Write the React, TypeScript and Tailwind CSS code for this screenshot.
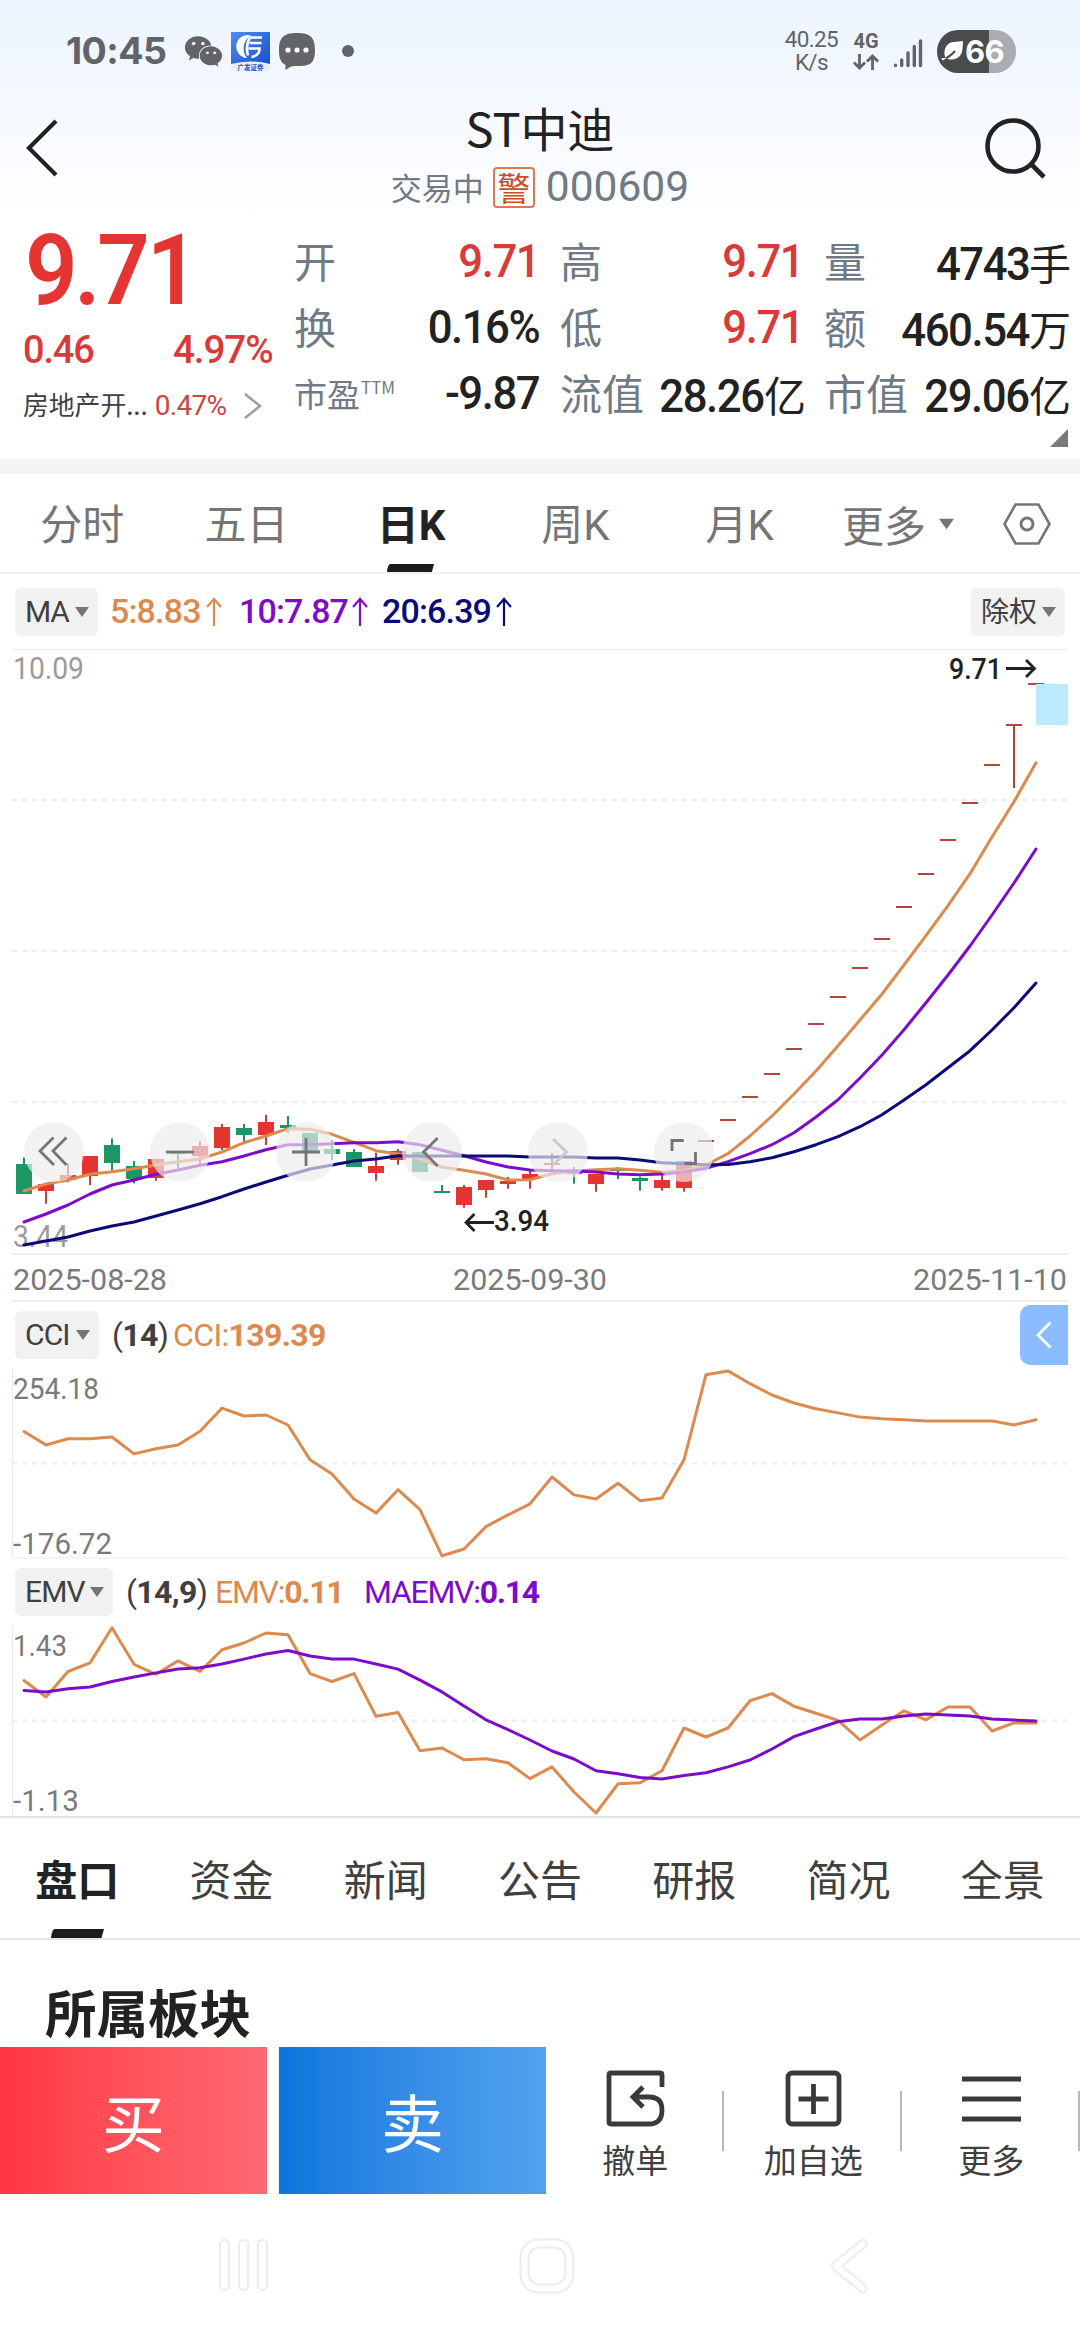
import type { ReactNode } from 'react';
import { FaWeixin } from 'react-icons/fa';
import { clsx } from 'clsx';

const RED = '#e53532';
const GREEN = '#1c9664';
const ORANGE = '#dd8a4e';
const PURPLE = '#7d0cc8';
const NAVY = '#0a0a78';

const STEP = 22;
const FIRST_X = 24;

// [colour, high, body top, body bottom, low]
type Candle = ['r' | 'g', number, number, number, number];

const candles: Candle[] = [
  ['g', 508.3, 515, 545, 545],
  ['r', 535, 535, 542, 554.7],
  ['r', 514.3, 526, 531, 533.3],
  ['r', 507, 507, 527, 536],
  ['g', 489.3, 496, 514, 521],
  ['g', 512, 517, 530, 534.3],
  ['r', 510, 510, 529, 531.7],
  ['g', 503, 503, 505, 519.3],
  ['r', 492, 497, 507, 516],
  ['r', 475, 478, 499, 501],
  ['g', 475, 479, 486, 493],
  ['r', 466, 473, 486, 496],
  ['g', 467, 476, 479, 483.7],
  ['g', 484, 484, 503, 503],
  ['g', 491, 500, 505, 511],
  ['g', 500, 503, 518, 518],
  ['r', 503.7, 517, 524, 531.7],
  ['r', 500, 502, 511, 515.7],
  ['g', 503, 503, 523, 523],
  ['g', 536, 542, 544, 544],
  ['r', 536, 538, 556, 558.7],
  ['r', 531, 531, 541, 548.7],
  ['r', 528, 532, 535, 539.7],
  ['r', 522, 525, 530, 539.7],
  ['r', 504, 514, 516, 522.7],
  ['g', 518, 523, 525, 534.7],
  ['r', 525, 525, 535, 542.7],
  ['g', 518, 520, 522, 530],
  ['g', 527.7, 529, 532, 541.7],
  ['r', 525, 531, 539, 541.7],
  ['r', 512, 512, 539, 542.7],
];

// one-price limit-up days after the last full candle
const limitUps = [492, 471, 448, 425, 400, 375, 348, 319, 290, 258, 225, 191, 154, 116, 76, 35];

const ma5 = [
  542, 535, 531, 525.3, 522.7, 519.7, 516, 512.7, 510, 503, 493.7, 487, 479.7, 480.3, 485.3, 493.3,
  501.7, 505, 510, 518, 521.3, 525, 531, 530.7, 524.7, 522, 520.7, 519.7, 521.3, 523.3, 521.7, 516,
  504.7, 487, 467, 445, 422, 396.7, 371, 345, 316, 286.7, 256.7, 224.7, 188, 152.7, 113.7,
];
const ma10 = [
  573, 565, 556, 545, 536, 531, 525.3, 521, 516.3, 512.7, 507, 500.7, 495.7, 495.7, 494.7, 493.7,
  493.7, 492.7, 495.7, 501.3, 506.7, 513, 518, 521, 521.7, 522, 523, 525, 525.7, 525, 523, 519.3,
  512.7, 504.7, 495.7, 483.7, 468, 450.7, 429, 406, 380.7, 353.7, 326, 297, 266, 234, 200,
];
const ma20 = [
  596, 592, 588, 582, 577, 573, 567, 561, 554.7, 547.7, 540, 533, 526.3, 520, 516, 512, 510, 506.7,
  507, 507, 507, 507, 507, 508, 508, 508, 509, 509, 511, 513.7, 514.7, 515.7, 515.5, 512.7, 508.7,
  502.7, 495.7, 487.7, 477.7, 465.7, 451, 435.7, 418.7, 401.7, 381, 358.7, 334,
];
const cci = [
  63.5, 77, 70.8, 70.8, 69, 85.9, 80.7, 77, 63.2, 40.1, 48, 47, 57, 91.8, 105.9, 131, 145.1, 121.7,
  141.7, 187.8, 181, 158.6, 146.9, 135.8, 109, 126.9, 131, 115.2, 132.7, 130, 91.8, 6.7, 2.9, 15.7,
  27, 35, 40.8, 44.9, 49.1, 50.8, 51.8, 52.9, 52.9, 52.9, 52.9, 57, 51.8,
];
const emv = [
  55.5, 72, 46.5, 37.9, 2.8, 39.3, 49.3, 35.9, 46.5, 24.8, 18, 8, 9.7, 48.6, 56.5, 48.6, 91.3, 87.5,
  125.7, 123, 134.7, 133.7, 137.8, 153.6, 141.9, 167, 188, 158.8, 157.8, 145.7, 103, 112, 103, 75.8,
  68.6, 81.3, 88.2, 95.4, 115, 99.9, 85.8, 94.8, 82, 82, 106, 97.9, 97.9,
];
const maemv = [
  65.5, 66.9, 63.8, 62, 56.5, 52, 47.9, 44.1, 42.8, 39, 34.1, 29, 25.5, 31, 34.1, 34.1, 39, 44.1,
  55.2, 66.9, 81, 94.8, 104.7, 115, 126, 134, 145.7, 148.8, 152.6, 154, 150.5, 147.8, 141.9, 135,
  124, 111.6, 104, 96.8, 94, 94, 91, 88.9, 90, 91, 94, 95.1, 96.1,
];

function Series({ values, color }: { values: number[]; color: string }) {
  const points = values.map((y, i) => `${FIRST_X + i * STEP},${y}`).join(' ');
  return <polyline points={points} fill="none" stroke={color} strokeWidth={3} strokeLinejoin="round" strokeLinecap="round" />;
}

function Dash({ y }: { y: number }) {
  return <line x1={12} x2={1068} y1={y} y2={y} stroke="#ececec" strokeWidth={2} strokeDasharray="5 5" />;
}

type LabelProps = {
  x: number;
  y: number;
  width: number;
  color?: string;
  size?: number;
  weight?: number;
  children: string;
};

function Label({ x, y, width, color = '#7a7a7a', size = 30, weight = 400, children }: LabelProps) {
  return (
    <text x={x} y={y} fill={color} fontSize={size} fontWeight={weight} textLength={width} lengthAdjust="spacingAndGlyphs">
      {children}
    </text>
  );
}

function Caret({ className }: { className?: string }) {
  return (
    <svg viewBox="0 0 14 10" className={clsx('h-[10px] w-[14px] shrink-0', className)} aria-hidden="true">
      <path d="M0 0h14L7 10z" fill="#757575" />
    </svg>
  );
}

function Chip({ children, className }: { children: ReactNode; className: string }) {
  return (
    <button
      type="button"
      className={clsx('flex h-12 shrink-0 items-center justify-between rounded-md bg-[#f1f1f1] pl-[10px] pr-[9px] text-[30px] leading-none text-[#404040]', className)}
    >
      {children}
      <Caret />
    </button>
  );
}

function UpArrow({ className }: { className: string }) {
  return (
    <svg viewBox="0 0 16 30" className={clsx('h-[30px] w-4 shrink-0', className)} fill="none" stroke="currentColor" strokeWidth={2.2}>
      <path d="M8 29V2M1 10l7-8 7 8" />
    </svg>
  );
}

function StatusBar() {
  return (
    <div className="flex h-[102px] items-center pl-[66px] pr-[64px] text-[#636467]">
      <span className="w-[118px] font-['Inter'] text-[37.500px] font-bold leading-none tracking-[-0.015em]">10:45</span>
      <FaWeixin className="size-[39px]" />
      <svg viewBox="0 0 39 39" className="ml-2 size-[39px]">
        <defs>
          <linearGradient id="broker" x1="0" y1="0" x2="1" y2="1">
            <stop offset="0" stopColor="#4f8df0" />
            <stop offset="1" stopColor="#1b4fc8" />
          </linearGradient>
        </defs>
        <rect width="39" height="39" fill="#e9eefa" />
        <path d="M0 0h39v32Q20 27 0 32z" fill="url(#broker)" />
        <path d="M20 3.500A11.500 11.500 0 1 0 16 26C11 21 11 9 20 3.500z" fill="#fff" />
        <path d="M19 5.500h12M18.500 11h12M17.500 16.500h11q0 7-8 8.500M19 5.500q-5 8-2 18" fill="none" stroke="#fff" strokeWidth="2.600" />
        <text x="19.500" y="37.500" textAnchor="middle" fontSize="6.500" fontWeight="700" fill="#2450b8">
          广发证券
        </text>
      </svg>
      <svg viewBox="0 0 36 38" className="ml-[9px] h-[38px] w-9">
        <path d="M18 1C31 1 36 5 36 18S31 34 20 34h-4q-5 0-7 2.500-2 1.500-3 .5 1-2 .5-4C1 30 0 25 0 18 0 5 5 1 18 1z" fill="#636467" />
        <circle cx="9" cy="18" r="2.600" fill="#fff" />
        <circle cx="18" cy="18" r="2.600" fill="#fff" />
        <circle cx="27" cy="18" r="2.600" fill="#fff" />
      </svg>
      <span className="ml-[27px] size-3 rounded-full bg-[#636467]" />

      <div className="ml-auto flex items-center">
        <div className="text-center text-[22.500px] leading-[23px] tracking-[-0.03em]">
          40.25
          <br />
          K/s
        </div>
        <div className="ml-[15px] flex w-[26px] flex-col items-center gap-1">
          <span className="text-[20px] font-bold leading-[18px]">4G</span>
          <svg viewBox="0 0 26 16" className="h-4 w-[26px]" fill="none" stroke="#636467" strokeWidth="2.800">
            <path d="M6.500 0v14M1 8.500l5.500 5.500 5.500-5.500M19.500 16V2M14 7.500L19.500 2 25 7.500" />
          </svg>
        </div>
        <svg viewBox="0 0 30 30" className="ml-[14px] mt-1 h-[30px] w-[30px]" stroke="#636467" strokeWidth="3.400" strokeLinecap="round">
          <path d="M2.500 27.200v.3M8.700 22v5.500M15 15v12.500M21.300 8.500v19M27.500 3v24.500" />
        </svg>
        <div className="ml-[14px] flex h-[43px] w-[79px] items-center rounded-[21px] bg-[linear-gradient(90deg,#4a4b4d_66%,#a9acb0_66%)] pl-1 text-white">
          <svg viewBox="0 0 24 22" className="h-[22px] w-[24px]">
            <path d="M4 17C2 9 6 2 13 2l9-1q0 3-.5 8C21 17 14 21 7 19z" fill="#fff" />
            <path d="M0 20q8-2 14-9" fill="none" stroke="#4a4b4d" strokeWidth="2" />
            <path d="M0 18.500l6-1-4 3z" fill="#fff" />
          </svg>
          <span className="font-['Inter'] text-[31px] font-bold leading-none tracking-[-0.02em]">66</span>
        </div>
      </div>
    </div>
  );
}

function TitleBar() {
  return (
    <div className="flex h-[123px] items-start pl-[26px] pr-[32px]">
      <svg viewBox="0 0 32 58" className="mt-[17px] h-[58px] w-8 shrink-0" fill="none" stroke="#222" strokeWidth="4.200">
        <path d="M30 2L3 29l27 27" />
      </svg>
      <div className="flex flex-1 flex-col items-center pl-[38px]">
        <h1 className="font-['Noto_Sans_CJK_SC'] text-[47px] leading-[50px] text-[#222]">ST中迪</h1>
        <div className="mt-[12px] flex items-center text-[#6f7a85]">
          <span className="font-['Noto_Sans_CJK_SC'] text-[31px] leading-[46px]">交易中</span>
          <span className="ml-[9px] flex h-[41px] w-[42px] items-center justify-center rounded border-2 border-[#d67a5c] font-['Noto_Sans_CJK_SC'] text-[33px] leading-none text-[#c8501f]">
            警
          </span>
          <span className="ml-[11px] text-[42.500px] leading-none">000609</span>
        </div>
      </div>
      <svg viewBox="0 0 64 62" className="mt-[15px] h-[62px] w-16 shrink-0" fill="none" stroke="#222" strokeWidth="4.600">
        <circle cx="29" cy="29" r="25.500" />
        <path d="M47 47l13 13" />
      </svg>
    </div>
  );
}

type Quote = { label: string; value: string; unit?: string; up?: boolean };

const quotes: Quote[][] = [
  [
    { label: '开', value: '9.71', up: true },
    { label: '换', value: '0.16%' },
    { label: '市盈', value: '-9.87' },
  ],
  [
    { label: '高', value: '9.71', up: true },
    { label: '低', value: '9.71', up: true },
    { label: '流值', value: '28.26', unit: '亿' },
  ],
  [
    { label: '量', value: '4743', unit: '手' },
    { label: '额', value: '460.54', unit: '万' },
    { label: '市值', value: '29.06', unit: '亿' },
  ],
];

const columnWidths = ['w-[245px]', 'w-[243px]', 'w-[244px]'];

function QuoteRow({ label, value, unit, up }: Quote) {
  const ttm = label === '市盈';
  return (
    <div className="flex h-[66px] items-center justify-between whitespace-nowrap">
      <span
        className={clsx(
          "flex font-['Noto_Sans_CJK_SC'] leading-none text-[#6f7a85]",
          ttm ? '-mt-0.5 text-[33px]' : '-mt-1 text-[42px]',
        )}
      >
        {label}
        {ttm && <sup className="top-0 mt-px pl-px text-[17px] leading-none">TTM</sup>}
      </span>
      <span
        className={clsx(
          'flex items-baseline text-[45.500px] font-medium leading-none tracking-[-0.033em]',
          up ? 'text-[#d83b3a]' : 'text-[#222]',
          unit && '-mr-[3px] pt-1',
        )}
      >
        <span className="inline-block origin-right scale-x-[0.96]">{value}</span>
        {unit && <span className="font-['Noto_Sans_CJK_SC'] text-[42px] font-normal leading-none tracking-normal">{unit}</span>}
      </span>
    </div>
  );
}

function QuotePanel() {
  return (
    <section className="flex h-[234px] bg-white pl-[23px]">
      <div className="w-[249px] text-[#d83b3a]">
        <p className="-mt-[3px] origin-left scale-x-[0.94] pl-0.5 text-[98px] font-semibold leading-[98px] tracking-[-0.035em] text-[#e53532]">9.71</p>
        <p className="mt-[8px] flex justify-between text-[39.500px] font-medium leading-[44px] tracking-[-0.03em]">
          <span className="origin-left scale-x-[0.96]">0.46</span>
          <span className="origin-right scale-x-[0.98]">4.97%</span>
        </p>
        <p className="mt-[16px] flex items-center whitespace-nowrap leading-9">
          <span className="-mt-1 font-['Noto_Sans_CJK_SC'] text-[25.800px] text-[#404040]">房地产开...</span>
          <span className="ml-[7px] text-[28px] tracking-[-0.025em] text-[#cc4442]">0.47%</span>
          <svg viewBox="0 0 18 26" className="ml-[18px] h-[26px] w-[18px]" fill="none" stroke="#98a0a8" strokeWidth="2.600">
            <path d="M1 1l15 12L1 25" />
          </svg>
        </p>
      </div>
      <div className="flex flex-1 justify-between pl-[22px] pr-[12px]">
        {quotes.map((column, i) => (
          <div key={column[0].label} className={clsx('pt-1', columnWidths[i])}>
            {column.map((quote) => (
              <QuoteRow key={quote.label} {...quote} />
            ))}
            {i === 2 && (
              <svg viewBox="0 0 18 18" className="ml-auto mt-[2px] size-[18px]">
                <path d="M18 0v18H0z" fill="#7a7a7a" />
              </svg>
            )}
          </div>
        ))}
      </div>
    </section>
  );
}

function PeriodTabs() {
  return (
    <nav className="flex h-[100px] border-b-2 border-[#f0f0f0] bg-white text-[#757575]">
      {['分时', '五日', '日K', '周K', '月K'].map((tab) => (
        <div key={tab} className="flex w-[164.400px] flex-col items-center">
          <span
            className={clsx(
              "mt-[24px] font-['Roboto','Noto_Sans_CJK_SC'] text-[42px] leading-[56px]",
              tab === '日K' && 'font-bold text-[#222]',
            )}
          >
            {tab}
          </span>
          {tab === '日K' && (
            <svg viewBox="0 0 53 9" className="mt-[10px] h-[9px] w-[53px]">
              <path d="M4 0h49l-2.500 9H0q1-9 4-9z" fill="#1c1c1c" />
            </svg>
          )}
        </div>
      ))}
      <div className="flex items-center pt-0.5">
        <span className="ml-5 font-['Noto_Sans_CJK_SC'] text-[42px] leading-[46px]">更多</span>
        <Caret className="ml-[13px] h-[12px] w-[15px]" />
        <svg viewBox="0 0 48 42" className="ml-[49px] h-[42px] w-12" fill="none" stroke="#757575" strokeWidth="2.600">
          <path d="M12.500 1.500h23L46.500 21l-11 19.500h-23L1.500 21z" />
          <circle cx="24" cy="21" r="6" strokeWidth="3" />
        </svg>
      </div>
    </nav>
  );
}

function MaRow() {
  return (
    <div className="flex h-[75px] items-center bg-white pl-[15px] pr-[15px] text-[34px] font-medium tracking-[-0.025em]">
      <Chip className="w-[83px] font-normal tracking-[-0.04em]">MA</Chip>
      <span className="ml-[12px] w-[96px] text-[#dd8a4e]">5:8.83</span>
      <UpArrow className="text-[#dd8a4e]" />
      <span className="ml-[17px] w-[113px] text-[#7d0cc8]">10:7.87</span>
      <UpArrow className="text-[#7d0cc8]" />
      <span className="ml-[14px] w-[114px] text-[#0a0a78]">20:6.39</span>
      <UpArrow className="text-[#0a0a78]" />
      <Chip className="ml-auto w-[94px] font-normal tracking-normal">
        <span className="-mt-1 font-['Noto_Sans_CJK_SC'] text-[28px]">除权</span>
      </Chip>
    </div>
  );
}

const chartControls = [
  { name: 'first', d: 'M29.500 15.500L16 29l14 14M42.500 15.500L29 29l13.500 14' },
  { name: 'zoom out', d: 'M16 30h28' },
  { name: 'zoom in', d: 'M16 30h28M30 16v28' },
  { name: 'previous', d: 'M35.700 16L21.500 30l14.200 14' },
  { name: 'next', d: 'M25 17l13.500 13L25 43' },
  { name: 'full screen', d: 'M18 29V18.500h11.700M30.500 41.500h11V30' },
];

function PriceChart() {
  return (
    <div className="relative h-[653px] bg-white">
      <svg viewBox="0 0 1080 653" className="block h-full w-full">
        <path d="M12 .5h1056" stroke="#ededed" strokeWidth="1.500" />
        <Dash y={151} />
        <Dash y={302} />
        <Dash y={453} />
        <path d="M12 605h1056M12 652h1056" stroke="#eef0ef" strokeWidth="2" />
        <Label x={13} y={30} width={71} color="#9b9b9b" size={31}>10.09</Label>
        <Label x={13} y={598} width={55} color="#9b9b9b" size={31}>3.44</Label>

        {candles.map(([kind, high, top, bottom, low], i) => {
          const x = FIRST_X + i * STEP;
          const color = kind === 'r' ? RED : GREEN;
          return (
            <g key={i} fill={color}>
              <rect x={x - 1} y={high} width={2} height={low - high} fill={kind === 'r' ? '#b9423e' : '#2a8a66'} />
              <rect x={x - 8} y={top} width={16} height={bottom - top} />
            </g>
          );
        })}
        {limitUps.map((y, i) => (
          <rect key={y} x={FIRST_X + (candles.length + i) * STEP - 8} y={y - 1} width={16} height={2} fill="#b5433f" />
        ))}
        <rect x={1013} y={76} width={2} height={63} fill="#b5433f" />
        <rect x={1036} y={35} width={32} height={41} fill="#bdeaff" />

        <Series values={ma5} color={ORANGE} />
        <Series values={ma10} color={PURPLE} />
        <Series values={ma20} color={NAVY} />

        <g fill="none" stroke="#222" strokeWidth="2.800">
          <path d="M1006 19.500h28M1026 11l8.500 8.500-8.500 8.500" />
          <path d="M494 573.500h-28M474.500 565l-8.500 8.500 8.500 8.500" />
        </g>
        <Label x={949} y={29.500} width={53} color="#222" weight={500}>9.71</Label>
        <Label x={494} y={582} width={55} color="#222" weight={500}>3.94</Label>

        <Label x={13} y={641} width={154}>2025-08-28</Label>
        <Label x={453} y={641} width={154}>2025-09-30</Label>
        <Label x={913} y={641} width={154}>2025-11-10</Label>
      </svg>
      <div className="absolute left-6 top-[473px] flex gap-[66px]">
        {chartControls.map(({ name, d }) => (
          <button key={name} type="button" aria-label={name} className="size-[60px] rounded-full bg-[#ececec]/68">
            <svg viewBox="0 0 60 60" fill="none" stroke={name === 'next' ? '#c9c9c9' : '#757575'} strokeWidth="2.800">
              <path d={d} />
            </svg>
          </button>
        ))}
      </div>
    </div>
  );
}

function IndicatorPanels() {
  return (
    <>
      <div className="flex h-[66px] items-center justify-between bg-white pl-[15px] pr-3">
        <div className="flex items-center text-[32px] tracking-[-0.02em] text-[#404040]">
          <Chip className="w-[84px] tracking-[-0.03em]">CCI</Chip>
          <span className="ml-[13px] w-[61px]">
            (<b>14</b>)
          </span>
          <span className="text-[#dd8a4e]">
            CCI:<b>139.39</b>
          </span>
        </div>
        <button type="button" aria-label="expand" className="flex h-[60px] w-12 items-center justify-center rounded-l-[10px] bg-[#8bbcff]">
          <svg viewBox="0 0 16 28" className="h-7 w-4" fill="none" stroke="#fff" strokeWidth="2.800">
            <path d="M14.500 1.500L2 14l12.500 12.500" />
          </svg>
        </button>
      </div>
      <svg viewBox="0 0 1080 191" className="block h-[191px] w-full overflow-visible">
        <path d="M12.500 0v190h1055.500" fill="none" stroke="#e9e9e9" strokeWidth="1" />
        <Dash y={95.500} />
        <Label x={13} y={31} width={86}>254.18</Label>
        <Label x={13} y={186} width={99}>-176.72</Label>
        <Series values={cci} color={ORANGE} />
      </svg>

      <div className="flex h-[66px] items-center pl-[15px] text-[32px] tracking-[-0.04em] text-[#404040]">
        <Chip className="w-[98px] tracking-[-0.03em]">EMV</Chip>
        <span className="ml-[13px] w-[89px] tracking-[-0.02em]">
          (<b>14,9</b>)
        </span>
        <span className="w-[149px] text-[#dd8a4e]">
          EMV:<b>0.11</b>
        </span>
        <span className="text-[#7d0cc8]">
          MAEMV:<b>0.14</b>
        </span>
      </div>
      <div className="h-[193px] border-b-2 border-[#e5e5e5]">
        <svg viewBox="0 0 1080 191" className="block h-[191px] w-full overflow-visible">
          <path d="M12.500 0v191" stroke="#e9e9e9" strokeWidth="1" />
          <Dash y={95.500} />
          <Label x={13} y={31} width={54}>1.43</Label>
          <Label x={13} y={186} width={66}>-1.13</Label>
          <Series values={emv} color={ORANGE} />
          <Series values={maemv} color={PURPLE} />
        </svg>
      </div>
    </>
  );
}

function InfoTabs() {
  return (
    <nav className="flex h-[122px] border-b-2 border-[#e5e5e5] bg-white font-['Noto_Sans_CJK_SC'] text-[42px] text-[#404040]">
      {['盘口', '资金', '新闻', '公告', '研报', '简况', '全景'].map((tab, i) => (
        <div key={tab} className="flex flex-1 flex-col items-center">
          <span className={clsx('mt-[30px] leading-[60px]', i === 0 && 'font-bold text-[#222]')}>{tab}</span>
          {i === 0 && (
            <svg viewBox="0 0 53 9" className="mt-auto h-[9px] w-[53px]">
              <path d="M4 0h49l-2.500 9H0q1-9 4-9z" fill="#1c1c1c" />
            </svg>
          )}
        </div>
      ))}
    </nav>
  );
}

const actions = [
  {
    label: '撤单',
    icon: <path d="M57 17V5q0-2-2-2H6q-2 0-2 2v47q0 2 2 2h38q13 0 13-14 0-13-13-13H30M38 17L28 27l10 10" />,
  },
  {
    label: '加自选',
    icon: (
      <>
        <rect x="5" y="3" width="51" height="51" rx="4" />
        <path d="M30.500 14v30M15.500 29h30" />
      </>
    ),
  },
  { label: '更多', icon: <path d="M1 9h59M1 29h59M1 49h59" /> },
];

function TradeBar() {
  return (
    <div className="flex h-[147px] bg-white">
      <button type="button" className="w-[267px] bg-linear-to-r from-[#ff3541] to-[#ff6973] font-['Noto_Sans_CJK_SC'] text-[63px] text-white">
        买
      </button>
      <button type="button" className="ml-3 w-[267px] bg-linear-to-r from-[#0876dc] to-[#52a3ef] font-['Noto_Sans_CJK_SC'] text-[63px] text-white">
        卖
      </button>
      {actions.map(({ label, icon }) => (
        <div key={label} className="flex w-[178px] items-center">
          <div className="flex flex-1 flex-col items-center pl-[3px] pt-[9px]">
            <svg viewBox="0 0 61 58" className="h-[58px] w-[61px]" fill="none" stroke="#3a3a3a" strokeWidth="4.800">
              {icon}
            </svg>
            <span className="mt-[9px] font-['Noto_Sans_CJK_SC'] text-[33px] leading-[44px] text-[#404040]">{label}</span>
          </div>
          <span className="h-[60px] w-[2.500px] bg-[#b8b8b8]" />
        </div>
      ))}
    </div>
  );
}

function SystemNav() {
  return (
    <div className="flex flex-1 items-start justify-between bg-white pl-[218px] pr-[211px] pt-[44px]">
      <svg viewBox="0 0 52 54" className="h-[54px] w-[52px]" fill="none" stroke="#ececec" strokeWidth="2">
        <rect x="2" y="2" width="9" height="50" rx="4" />
        <rect x="21" y="2" width="9" height="50" rx="4" />
        <rect x="40" y="2" width="9" height="50" rx="4" />
      </svg>
      <svg viewBox="0 0 56 56" className="mr-[6px] h-14 w-14" fill="none" stroke="#ececec" strokeWidth="2">
        <rect x="1.500" y="1.500" width="53" height="53" rx="18" />
        <rect x="9.500" y="9.500" width="37" height="37" rx="11" />
      </svg>
      <svg viewBox="0 0 40 56" className="h-14 w-10" fill="none" stroke="#ececec" strokeWidth="2">
        <path d="M31 3q3-3 6 0 1.500 3-1 6L13 28l23 19q2.500 3 1 6-3 3-6 0L4 31q-3-3 0-6z" />
      </svg>
    </div>
  );
}

export default function App() {
  return (
    <div className="flex h-[2340px] w-[1080px] flex-col overflow-hidden bg-white font-['Roboto','Noto_Sans_CJK_SC',sans-serif]">
      <header className="bg-linear-to-b from-[#ecf4ff] to-white">
        <StatusBar />
        <TitleBar />
      </header>
      <QuotePanel />
      <div className="h-[15px] bg-[#f4f4f4]" />
      <PeriodTabs />
      <MaRow />
      <PriceChart />
      <IndicatorPanels />
      <InfoTabs />
      <section className="h-[107px] overflow-hidden bg-white pl-[45px] pt-[36px]">
        <h2 className="font-['Noto_Sans_CJK_SC'] text-[51.500px] font-bold leading-[70px] text-[#222]">所属板块</h2>
      </section>
      <TradeBar />
      <SystemNav />
    </div>
  );
}
